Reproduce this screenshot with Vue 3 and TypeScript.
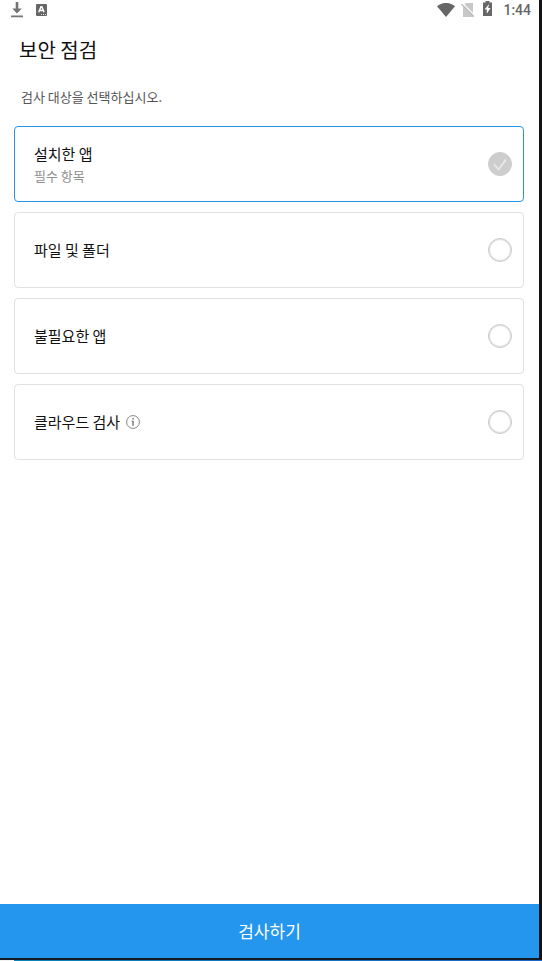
<script setup lang="ts">
import { ref } from 'vue'

interface Target {
  id: string
  label: string
  note?: string
  required?: boolean
  info?: boolean
  checked: boolean
}

const targets = ref<Target[]>([
  { id: 'installed', label: '설치한 앱', note: '필수 항목', required: true, checked: true },
  { id: 'files', label: '파일 및 폴더', checked: false },
  { id: 'unwanted', label: '불필요한 앱', checked: false },
  { id: 'cloud', label: '클라우드 검사', info: true, checked: false },
])
</script>

<template>
  <div class="device">
    <div class="screen">
      <div class="status">
        <div class="status-group notices">
          <svg width="12" height="16" viewBox="0 0 12 16" fill="#747474">
            <path d="M4.7 0h2.6v6.5h3.4L6 11.5 1.3 6.5h3.4zM0 13.4h12v1.8H0z" />
          </svg>
          <svg width="11" height="12" viewBox="0 0 11 12">
            <rect width="11" height="12" rx="1" fill="#666" />
            <path d="M2.7 8.2 5 2.7h.8l2.3 5.5M3.7 6.4H7" fill="none" stroke="#fff" stroke-width="1.5" />
            <path d="M5 10.5h1M7 10.5h1M9 10.5h1" stroke="#ddd" />
          </svg>
        </div>
        <div class="status-group system">
          <svg width="18" height="14" viewBox="0 0 18 14">
            <path d="M0 3.2C5-1.1 13-1.1 18 3.2L9 14z" fill="#666" />
          </svg>
          <svg class="sim" width="14" height="14" viewBox="0 0 14 14">
            <path d="M5 0h7v14H2V3.5z" fill="#c8c8c8" />
            <path d="m1.3.2 13 13" stroke="#fff" stroke-width="1.4" />
            <path d="m.5 1 12.5 12.7" stroke="#bbb" stroke-width="1.2" />
          </svg>
          <svg class="battery" width="9" height="15" viewBox="0 0 9 15">
            <path d="M0 1.5h2.5V0h4v1.5H9V15H0z" fill="#666" />
            <path d="M6 3 1.6 8.4h2.2v4.4L7.6 7H5.2z" fill="#fff" />
          </svg>
          <span class="clock">1:44</span>
        </div>
      </div>

      <main class="content">
        <h1 class="title">보안 점검</h1>
        <p class="lead">검사 대상을 선택하십시오.</p>
        <ul class="targets">
          <li v-for="t in targets" :key="t.id">
            <label class="card" :class="{ selected: t.checked }" :for="t.id">
              <span class="text">
                <span class="label">
                  {{ t.label }}
                  <svg v-if="t.info" width="14" height="14" viewBox="0 0 14 14" fill="none" stroke="#858585">
                    <circle cx="7" cy="7" r="6.4" />
                    <path d="M7 3v1.6M7 5.8v5" stroke-width="1.6" />
                    <path d="M5.6 6.2H7" />
                  </svg>
                </span>
                <span v-if="t.note" class="note">{{ t.note }}</span>
              </span>
              <span class="check">
                <input :id="t.id" v-model="t.checked" type="checkbox" :disabled="t.required" />
                <svg v-if="t.checked" class="tick" width="24" height="24" viewBox="0 0 24 24">
                  <path d="m6 12.3 4.7 5L18 7.5" fill="none" stroke="#e9e9e9" stroke-width="1.8" />
                </svg>
              </span>
            </label>
          </li>
        </ul>
      </main>

      <button class="scan" type="button">검사하기</button>
    </div>
    <div class="edge"></div>
  </div>
</template>

<style>
body {
  background: #fff;
}
</style>

<style scoped>
.device {
  box-sizing: border-box;
  min-height: 100vh;
  display: flex;
  flex-direction: column;
  font-family: "Noto Sans CJK KR", sans-serif;
  color: #111;
}
.screen {
  flex: 1;
  display: flex;
  flex-direction: column;
  background: #fff;
  border-right: 3px solid #101214;
  border-bottom: 2px solid #101a26;
}
.edge {
  height: 1px;
  background: linear-gradient(90deg, #0b83b4, #1f66c4);
  border-left: 14px solid #f2f2f2;
}
.status {
  display: flex;
  justify-content: space-between;
  height: 20px;
  padding: 0 8px 0 11px;
}
.status-group {
  display: flex;
  align-items: center;
}
.notices {
  gap: 13px;
}
.sim {
  margin-left: 6px;
}
.battery {
  margin: 0 11px 3px 8px;
}
.clock {
  font: 500 14px/20px Roboto, sans-serif;
  color: #666;
}
.content {
  flex: 1;
  padding: 0 15px 24px 14px;
}
.title {
  margin: 0;
  padding: 0 5px;
  font-size: 20px;
  line-height: 60px;
  font-weight: 400;
}
.lead {
  margin: 0;
  padding: 6px 7px 18px;
  font-size: 13px;
  line-height: 22px;
  color: #555;
}
.targets {
  display: grid;
  gap: 10px;
  margin: 0;
  padding: 0;
  list-style: none;
}
.card {
  box-sizing: border-box;
  display: flex;
  align-items: center;
  justify-content: space-between;
  min-height: 76px;
  padding: 10px 11px 10px 19px;
  border: 1px solid #e0e0e0;
  border-radius: 4px;
}
.card.selected {
  border-color: #2494e8;
}
.text {
  display: flex;
  flex-direction: column;
}
.label {
  display: flex;
  align-items: center;
  gap: 6px;
  font-size: 15px;
  line-height: 24px;
}
.note {
  font-size: 13px;
  line-height: 20px;
  color: #909090;
}
.check {
  display: grid;
}
.check > * {
  grid-area: 1 / 1;
}
.check input {
  appearance: none;
  box-sizing: border-box;
  width: 24px;
  height: 24px;
  margin: 0;
  border: 1px solid #c8c8c8;
  border-radius: 50%;
  background: #fff;
  box-shadow: inset 0 0 1px 1px #e0e0e0;
}
.check input:checked {
  border-color: #cdcdcd;
  background: #cdcdcd;
  box-shadow: none;
}
.tick {
  pointer-events: none;
}
.scan {
  height: 54px;
  border: 0;
  padding: 0;
  background: #2596ed;
  color: #fff;
  font-family: inherit;
  font-size: 17px;
  line-height: 24px;
}
</style>
